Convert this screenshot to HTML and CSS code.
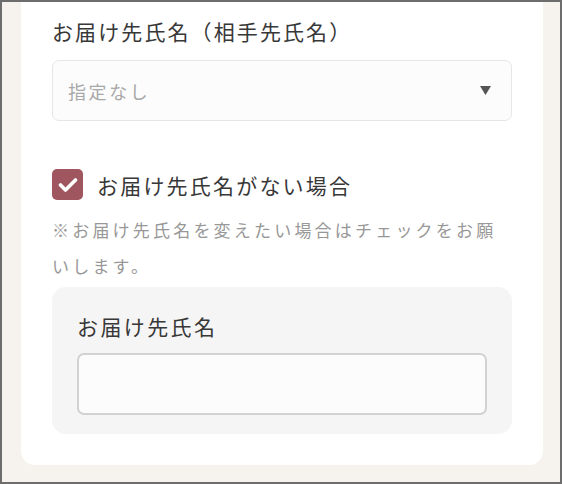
FILE: index.html
```html
<!DOCTYPE html>
<html lang="ja">
<head>
<meta charset="utf-8">
<link rel="stylesheet" href="styles.css">
</head>
<body>
<div class="frame">
  <div class="card">
    <div class="field-title">お届け先氏名（相手先氏名）</div>
    <div class="select">
      <span class="placeholder">指定なし</span>
      <svg class="caret" width="11" height="9" viewBox="0 0 11 9"><polygon points="0,0 11,0 5.5,9" fill="#555"/></svg>
    </div>
    <label class="check-row">
      <span class="checkbox">
        <svg width="20" height="16" viewBox="0 0 20 16"><polyline points="2.5,8 7.5,13 17.5,3" fill="none" stroke="#fff" stroke-width="3.6" stroke-linecap="round" stroke-linejoin="round"/></svg>
      </span>
      <span class="check-label">お届け先氏名がない場合</span>
    </label>
    <p class="note">※お届け先氏名を変えたい場合はチェックをお願<br>いします。</p>
    <div class="subbox">
      <div class="sub-title">お届け先氏名</div>
      <div class="input"></div>
    </div>
  </div>
</div>
</body>
</html>
```

FILE: styles.css
```css
html, body {
  margin: 0;
  padding: 0;
}
body {
  font-family: "Noto Sans CJK JP", "Noto Sans", sans-serif;
  color: #383838;
}
.frame {
  box-sizing: border-box;
  width: 562px;
  height: 484px;
  border: 2px solid #6d6d6d;
  background: #f6f3ee;
  padding: 0 17px 0 19px;
  overflow: hidden;
}
.card {
  background: #fff;
  border-radius: 0 0 14px 14px;
  padding: 14px 31px 31px 31px;
}
.field-title {
  font-size: 21px;
  line-height: 30px;
  letter-spacing: 2.1px;
  color: #383838;
}
.select {
  margin-top: 14px;
  box-sizing: border-box;
  height: 61px;
  border: 1px solid #e6e6e6;
  border-radius: 7px;
  background: #fcfcfc;
  display: flex;
  align-items: center;
  justify-content: space-between;
  padding: 0 20px 0 15px;
}
.placeholder {
  font-size: 18px;
  letter-spacing: 2.6px;
  color: #a8a8a8;
}
.caret {
  display: block;
}
.check-row {
  margin-top: 48px;
  display: flex;
  align-items: center;
  gap: 14px;
}
.checkbox {
  width: 31px;
  height: 31px;
  border-radius: 5px;
  background: #a0565f;
  display: flex;
  align-items: center;
  justify-content: center;
  flex: none;
}
.check-label {
  font-size: 21px;
  letter-spacing: 2.2px;
  line-height: 30px;
  color: #383838;
}
.note {
  margin: 12px 0 0;
  font-size: 17px;
  line-height: 36px;
  letter-spacing: 3.2px;
  color: #989898;
}
.subbox {
  margin-top: 3px;
  background: #f5f5f5;
  border-radius: 14px;
  padding: 24px 25px 19px;
}
.sub-title {
  font-size: 21px;
  line-height: 30px;
  letter-spacing: 2.4px;
  color: #383838;
}
.input {
  margin-top: 12px;
  box-sizing: border-box;
  height: 62px;
  border: 2px solid #d2d2d2;
  border-radius: 7px;
  background: #fcfcfc;
}
```
